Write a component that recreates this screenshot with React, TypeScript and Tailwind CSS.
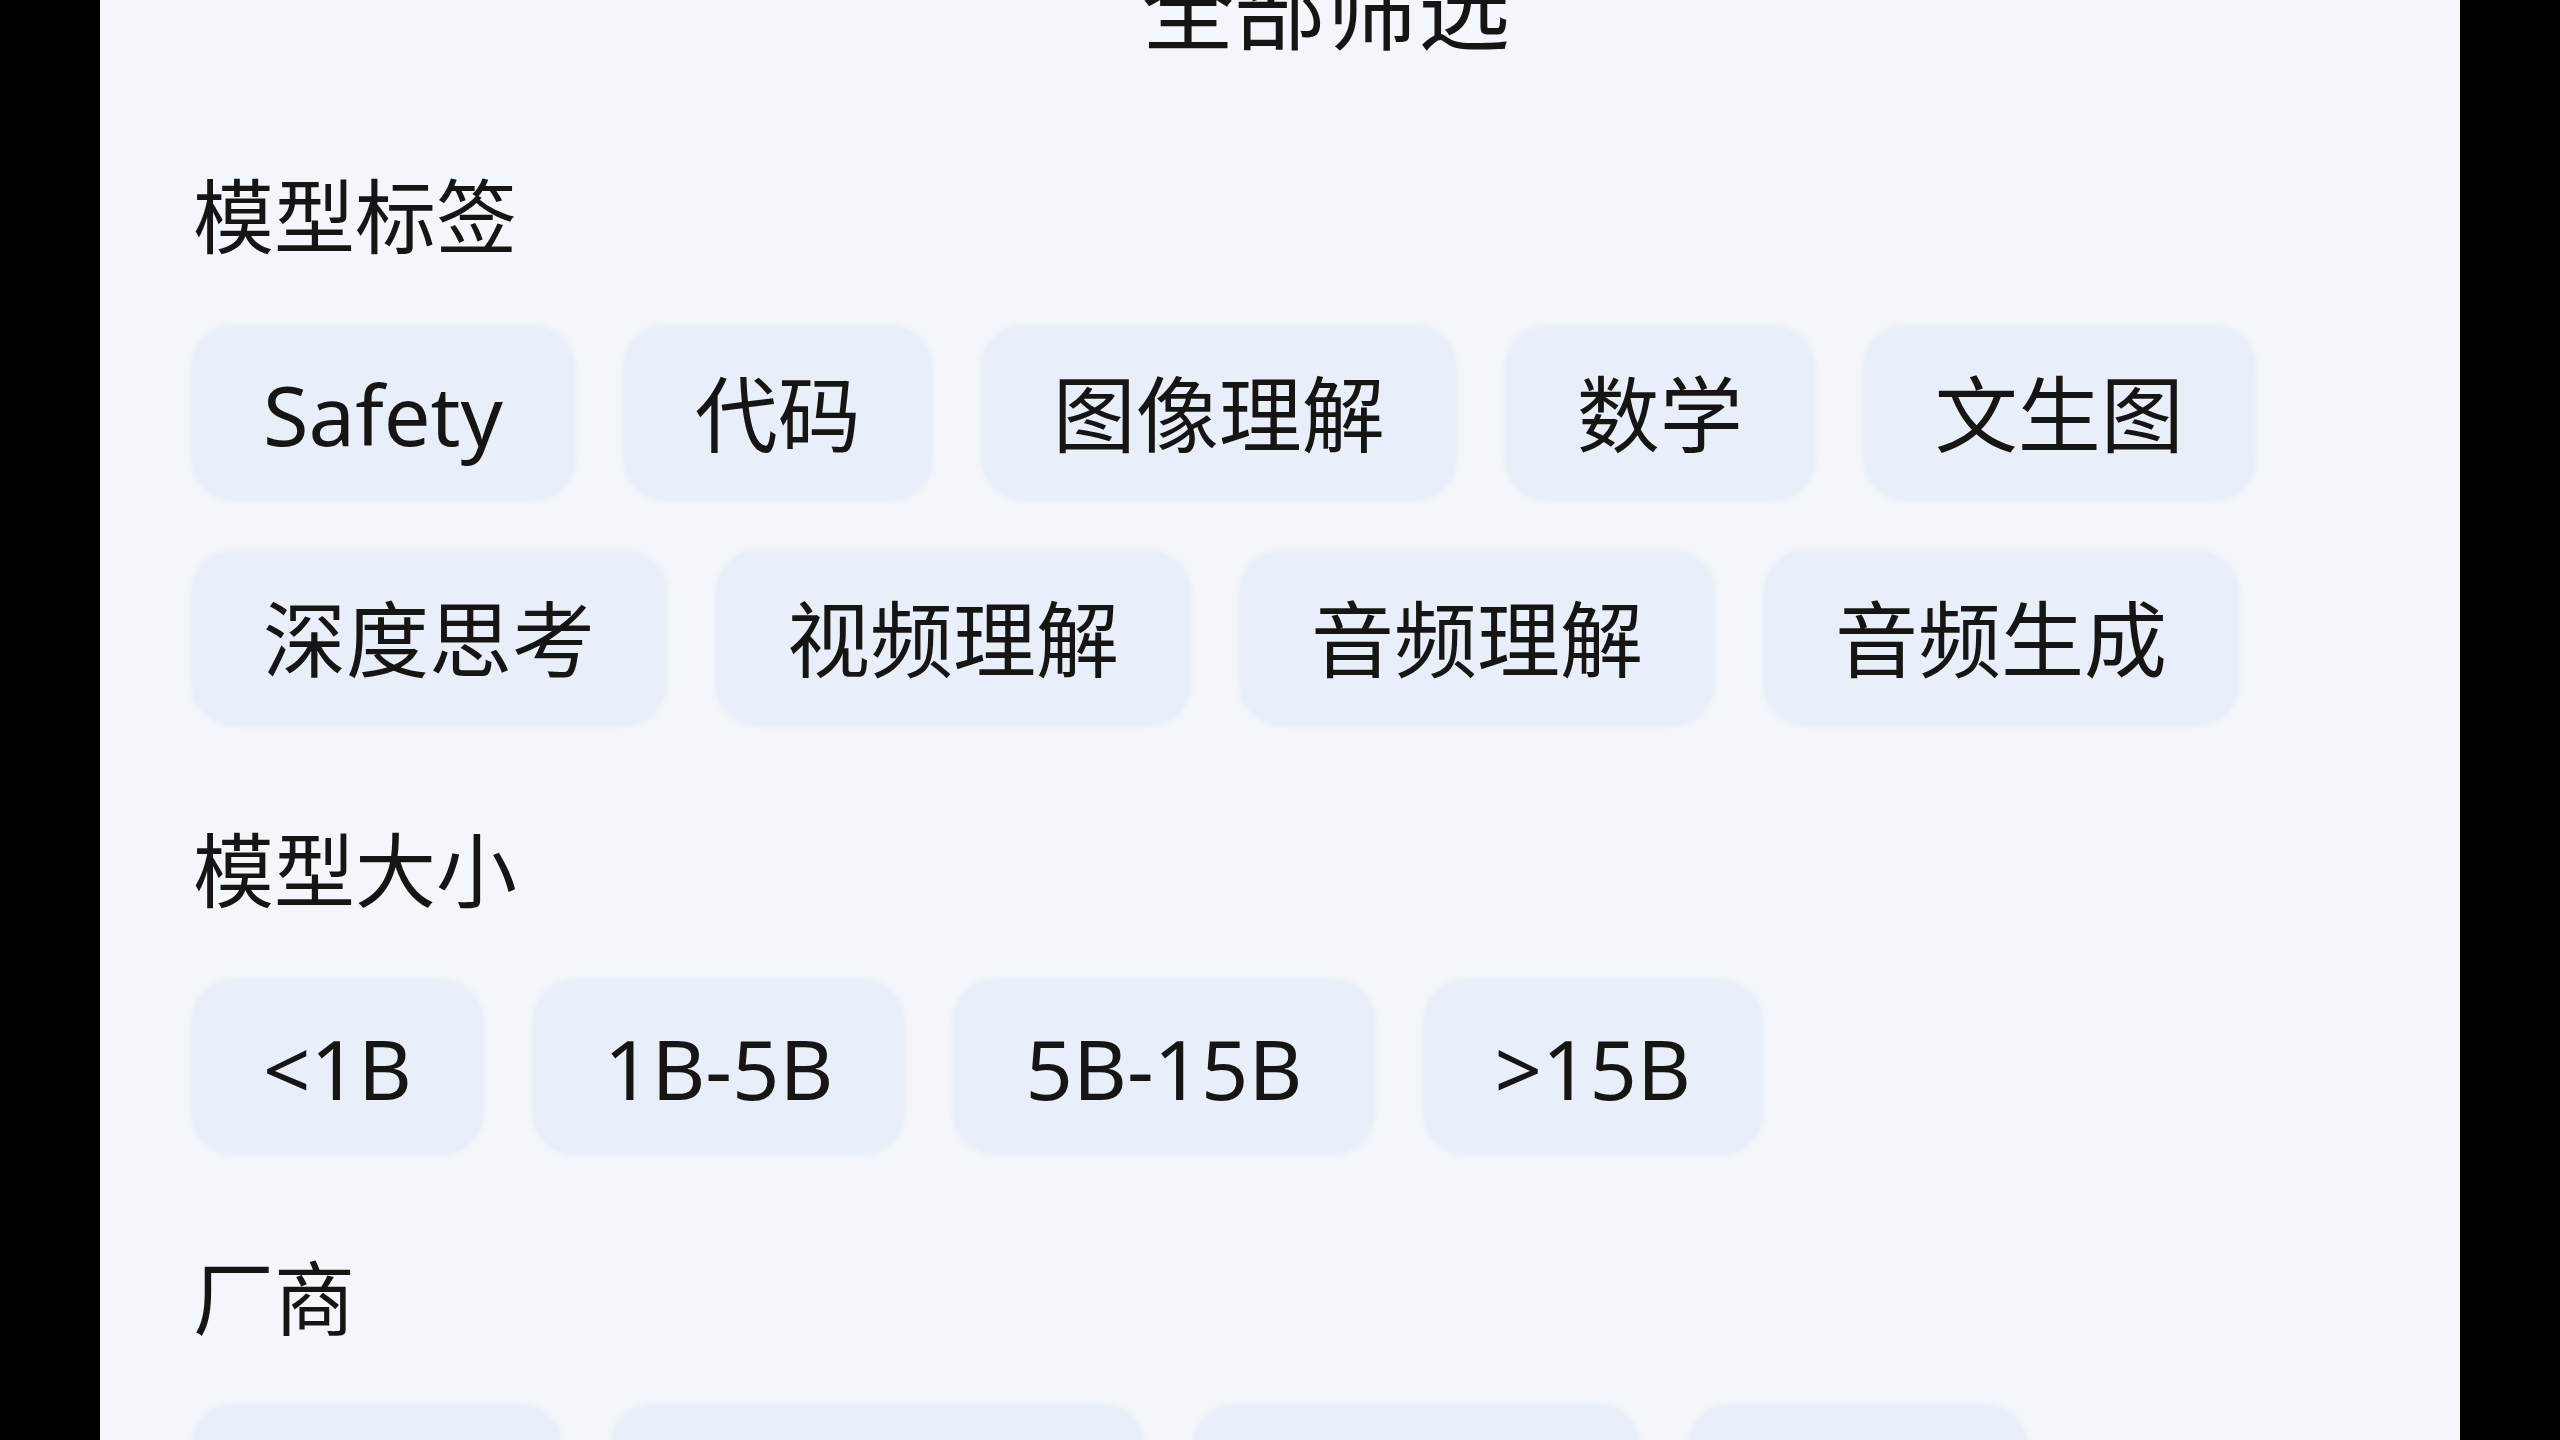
const TAGS = ['Safety', '代码', '图像理解', '数学', '文生图', '深度思考', '视频理解', '音频理解', '音频生成'];
const SIZES = ['<1B', '1B-5B', '5B-15B', '>15B'];
const VENDORS: Array<{ label: string; w: string }> = [
  { label: '阿里', w: 'w-[367px]' },
  { label: 'DeepSeek', w: 'w-[531px]' },
  { label: '智谱AI', w: 'w-[443px]' },
  { label: 'Meta', w: 'w-[336px]' },
];

function Chip({ children, className = 'px-[70px]' }: { children: React.ReactNode; className?: string }) {
  return (
    <button
      type="button"
      className={`h-[172px] rounded-[40px] bg-[#e8eff9] text-[#151515] text-[83px] leading-none whitespace-nowrap flex items-center justify-center shadow-[0_0_6px_rgba(220,230,245,0.9)] ${className}`}
    >
      {children}
    </button>
  );
}

function Section({ title, children, gap, inner = 'mt-[71px]' }: { title: string; children: React.ReactNode; gap: string; inner?: string }) {
  return (
    <section className={gap}>
      <h2 className="text-[81px] leading-none text-[#151515] font-normal">{title}</h2>
      <div className={`${inner} flex flex-wrap gap-x-[52px] gap-y-[53px]`}>{children}</div>
    </section>
  );
}

export default function App() {
  return (
    <div
      className="h-screen overflow-hidden bg-black flex justify-center"
      style={{ fontFamily: '"Noto Sans", "Noto Sans CJK SC", sans-serif' }}
    >
      <div className="w-[2360px] h-full bg-[#f3f7fb] px-[93px]">
        {/* ── Title ───────────────────────────── */}
        <div className="-mt-[38px] flex justify-center pl-[92px]">
          <h1 className="text-[92px] leading-none text-[#151515] font-normal">全部筛选</h1>
        </div>

        <Section title="模型标签" gap="mt-[121px]">
          {TAGS.map(t => <Chip key={t}>{t}</Chip>)}
        </Section>

        <Section title="模型大小" gap="mt-[105px]">
          {SIZES.map(s => <Chip key={s}>{s}</Chip>)}
        </Section>

        <Section title="厂商" gap="mt-[104px]" inner="mt-[68px]">
          {VENDORS.map(v => (
            <Chip key={v.label} className={`${v.w} items-end pb-[30px]`}>{v.label}</Chip>
          ))}
        </Section>
      </div>
    </div>
  );
}
